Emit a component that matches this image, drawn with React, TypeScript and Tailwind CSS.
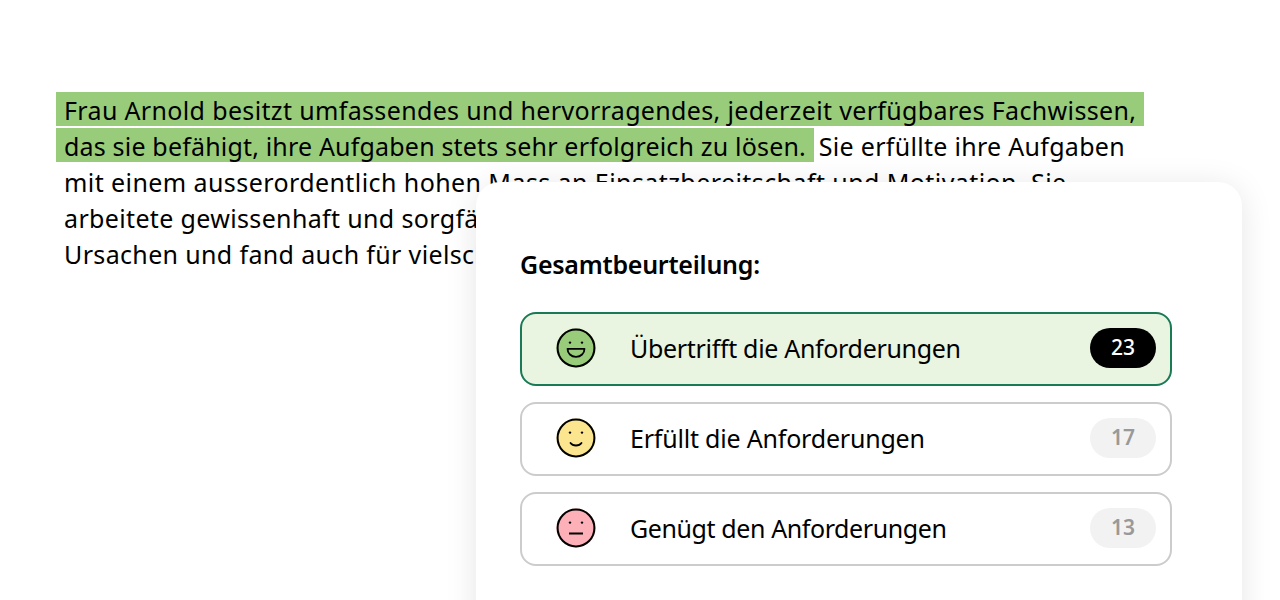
const OPTIONS = [
  { label: "Übertrifft die Anforderungen", count: 23, mood: "great", active: true, tracking: "tracking-[-0.32px]" },
  { label: "Erfüllt die Anforderungen", count: 17, mood: "good", active: false, tracking: "tracking-[-0.2px]" },
  { label: "Genügt den Anforderungen", count: 13, mood: "okay", active: false, tracking: "tracking-[-0.4px]" },
] as const

type Mood = (typeof OPTIONS)[number]["mood"]

const MOOD_FILL: Record<Mood, string> = {
  great: "#99cc7a",
  good: "#fbe58e",
  okay: "#fdb0b8",
}

function Smiley({ mood }: { mood: Mood }) {
  return (
    <svg viewBox="0 0 40 40" className="mb-0.5 size-10 shrink-0" fill="none">
      <circle cx="20" cy="20" r="19.6" fill={MOOD_FILL[mood]} />
      <circle cx="20" cy="20" r="18.4" stroke="#000" strokeWidth="2" />
      <circle cx="14" cy="14.6" r="1.2" fill="#000" />
      <circle cx="26" cy="14.6" r="1.2" fill="#000" />
      {mood === "great" && (
        <path d="M11.5 20.800h17c0 4.600-3.600 8-8.500 8s-8.500-3.400-8.500-8Z" stroke="#000" strokeWidth="1.800" strokeLinejoin="round" />
      )}
      {mood === "good" && (
        <path d="M14.500 25c1.300 1.800 3.300 2.500 5.500 2.500s4.200-.7 5.500-2.500" stroke="#000" strokeWidth="1.800" strokeLinecap="round" />
      )}
      {mood === "okay" && <path d="M13 25.500h14" stroke="#000" strokeWidth="2" />}
    </svg>
  )
}

function OptionRow({ label, count, mood, active, tracking }: (typeof OPTIONS)[number]) {
  return (
    <div
      className={`flex h-[74px] items-center rounded-2xl border-2 pr-3.5 pl-[34px] ${
        active ? "border-[#1a7a55] bg-[#e9f4e1]" : "border-[#cccccc] bg-white"
      }`}
    >
      <Smiley mood={mood} />
      <span className={`ml-[34px] flex-1 text-[25px] text-black ${tracking}`}>{label}</span>
      <span
        className={`mb-0.5 flex h-10 w-[66px] items-center justify-center rounded-full text-[21px] ${
          active ? "bg-black font-medium text-white" : "bg-[#f2f2f2] font-semibold text-[#999999]"
        }`}
      >
        {count}
      </span>
    </div>
  )
}

export default function App() {
  return (
    <div className="relative h-[600px] overflow-hidden bg-white font-['Noto_Sans',sans-serif] text-black">
      <p className="px-16 pt-[92px] text-[25px] leading-[36px] tracking-[0.35px] whitespace-nowrap">
        <span className="-ml-2 bg-[linear-gradient(#99cc7a,#99cc7a)] bg-[size:100%_34px] bg-no-repeat box-decoration-clone px-2 pt-px">
          Frau Arnold besitzt umfassendes und hervorragendes, jederzeit verfügbares Fachwissen,
          <br />
          <span className="tracking-[0.18px]">das sie befähigt, ihre Aufgaben stets sehr erfolgreich zu lösen.</span>
        </span>
        <span className="-ml-0.5 tracking-[0.3px]"> Sie erfüllte ihre Aufgaben</span>
        <br />
        <span className="tracking-[0.42px]">mit einem ausserordentlich hohen Mass an Einsatzbereitschaft und Motivation. Sie</span>
        <br />
        arbeitete gewissenhaft und sorgfältig
        <br />
        Ursachen und fand auch für vielschichtige
      </p>

      <section className="absolute top-[182px] left-[476px] h-[500px] w-[766px] rounded-3xl bg-white px-11 pt-[64px] shadow-[0_4px_32px_rgba(0,0,0,0.1)]">
        <h2 className="text-[25px] leading-9 font-semibold tracking-[-0.25px]">Gesamtbeurteilung:</h2>
        <div className="mt-[30px] flex w-[652px] flex-col gap-4">
          {OPTIONS.map((option) => (
            <OptionRow key={option.label} {...option} />
          ))}
        </div>
      </section>
    </div>
  )
}
